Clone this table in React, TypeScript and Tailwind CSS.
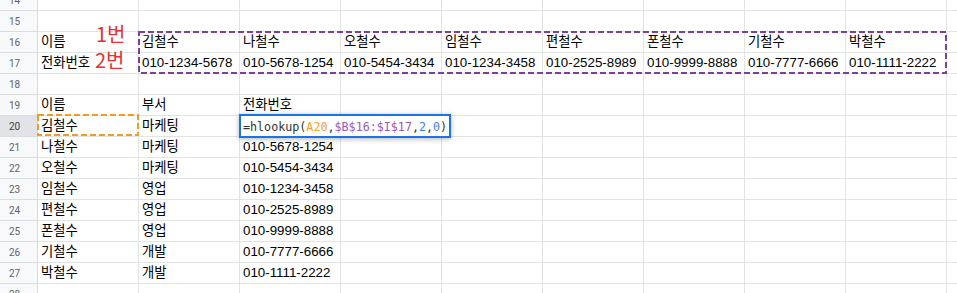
const names = ['김철수', '나철수', '오철수', '임철수', '편철수', '폰철수', '기철수', '박철수'];
const phones = [
  '010-1234-5678',
  '010-5678-1254',
  '010-5454-3434',
  '010-1234-3458',
  '010-2525-8989',
  '010-9999-8888',
  '010-7777-6666',
  '010-1111-2222',
];
const depts = ['마케팅', '마케팅', '마케팅', '영업', '영업', '영업', '개발', '개발'];

type Row = { num: number; cells: string[]; active?: boolean };

const rows: Row[] = [
  { num: 14, cells: [] },
  { num: 15, cells: [] },
  { num: 16, cells: ['이름', ...names] },
  { num: 17, cells: ['전화번호', ...phones] },
  { num: 18, cells: [] },
  { num: 19, cells: ['이름', '부서', '전화번호'] },
  ...names.map((n, i) => ({
    num: 20 + i,
    cells: [n, depts[i], i === 0 ? '' : phones[i]],
    active: i === 0,
  })),
  { num: 28, cells: [] },
];

function Cell({ text }: { text?: string }) {
  return (
    <div className="w-[101px] h-[21px] shrink-0 border-r border-b border-[#e2e3e3] flex items-end px-[3px] pb-[2px] overflow-visible whitespace-nowrap">
      <span className="text-[13.33px] leading-[16px] text-black">{text}</span>
    </div>
  );
}

function SheetRow({ row }: { row: Row }) {
  return (
    <div className="flex h-[21px]">
      <div
        className={`w-[38px] h-[21px] shrink-0 border-r border-b border-[#dadce0] flex items-center justify-center pr-[8px] font-['Roboto',sans-serif] text-[10px] ${
          row.active ? 'bg-[#e1e3e6] text-[#3c4043]' : 'bg-[#f8f9fa] text-[#5f6368]'
        }`}
      >
        {row.num}
      </div>
      {Array.from({ length: 10 }).map((_, i) => (
        <Cell key={i} text={row.cells[i]} />
      ))}
    </div>
  );
}

export default function App() {
  return (
    <div className="relative w-[957px] h-[293px] overflow-hidden bg-white font-['Liberation_Sans','Noto_Sans_CJK_KR',sans-serif]">
      <div className="flex flex-col mt-[-10px]">
        {rows.map((r) => (
          <SheetRow key={r.num} row={r} />
        ))}
      </div>

      {/* lookup range B16:I17 */}
      <svg className="absolute left-[138px] top-[31px]" width="809" height="43">
        <rect x="1" y="1" width="807" height="41" fill="none" stroke="#7e3f98" strokeWidth="2" strokeDasharray="6 3" />
      </svg>

      {/* A20 reference */}
      <svg className="absolute left-[37px] top-[114px]" width="102" height="22">
        <rect x="1" y="1" width="100" height="20" fill="none" stroke="#f29b26" strokeWidth="2" strokeDasharray="6 3" />
      </svg>

      {/* in-cell formula editor */}
      <div className="absolute left-[239px] top-[114px] w-[212px] h-[24px] bg-white border-2 border-[#1a73e8] shadow-[0_1px_5px_rgba(0,0,0,0.3)] flex items-end pl-[2px] pb-[1px] whitespace-nowrap">
        <span className="font-['DejaVu_Sans_Mono',monospace] text-[11.7px] leading-[16px] text-[#333]">
          =hlookup(<span className="text-[#f4a12c]">A20</span>,
          <span className="text-[#9b59b6]">$B$16:$I$17</span>,
          <span className="text-[#3f7fe0]">2</span>,<span className="text-[#3f7fe0]">0</span>)
        </span>
      </div>

      <div className="absolute left-[96px] top-[24px] text-[20px] leading-[20px] text-[#e8312f] font-['Noto_Sans_CJK_KR',sans-serif]">
        1번
      </div>
      <div className="absolute left-[95px] top-[50px] text-[20px] leading-[20px] text-[#e8312f] font-['Noto_Sans_CJK_KR',sans-serif]">
        2번
      </div>
    </div>
  );
}
